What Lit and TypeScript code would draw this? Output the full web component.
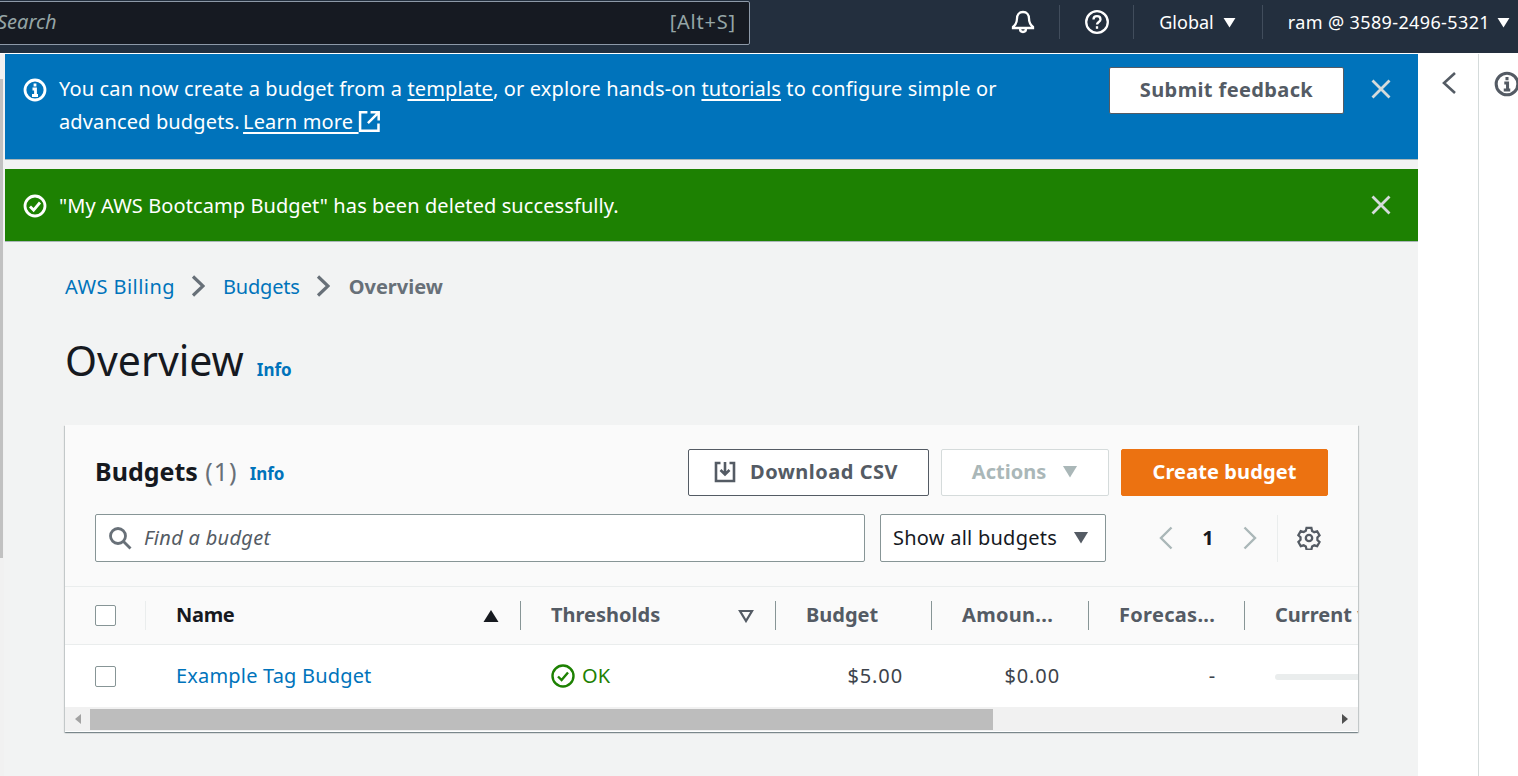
import { LitElement, html, css } from "lit";
import { customElement } from "lit/decorators.js";

const xIcon = html`<svg class="x" viewBox="0 0 20 20"><path d="M1.5 1.5 18.5 18.5M18.5 1.5 1.5 18.5" fill="none" stroke="currentColor" stroke-width="2.800"/></svg>`;
const caret = html`<svg class="caret" viewBox="0 0 14 12"><path d="M0.5 1h13L7 11.500z" fill="currentColor"/></svg>`;
const crumbSep = html`<svg class="sep" viewBox="0 0 14 22"><path d="M2 1.500l10 9.500-10 9.500" fill="none" stroke="#687078" stroke-width="3.200"/></svg>`;
const infoCircle = html`<svg viewBox="0 0 24 24" class="ban-ic"><circle cx="12" cy="12" r="10" fill="none" stroke="currentColor" stroke-width="2.800"/><path d="M12 5.600v3M9.500 11h3v6M9 17.500h6" fill="none" stroke="currentColor" stroke-width="2.800"/></svg>`;
const checkCircle = html`<svg viewBox="0 0 24 24" class="ban-ic"><circle cx="12" cy="12" r="10" fill="none" stroke="currentColor" stroke-width="2.800"/><path d="M7 12.500l3.600 3.600L17 8.500" fill="none" stroke="currentColor" stroke-width="2.800"/></svg>`;

@customElement("app-root")
export class AppRoot extends LitElement {
  static styles = css`
    :host { display: block; width: 1518px; height: 776px; overflow: hidden; background: #fff;
      font-family: "Noto Sans", "Open Sans", sans-serif; font-size: 20px; color: #16191f; letter-spacing: .18px; }
    * { box-sizing: border-box; }
    .top { height: 53px; background: #232f3e; display: flex; align-items: flex-start; padding-top: 1px; color: #fff; font-size: 18px; }
    .search { width: 754px; height: 44px; margin-left: -4px; flex: none; background: #161a22; border: 1px solid #8d99a8; border-radius: 2px;
      display: flex; align-items: center; justify-content: space-between; padding: 0 13px 3px 0; color: #95a5a6; font-size: 20px; letter-spacing: 0; }
    .search span { letter-spacing: .8px; }
    .top-right { margin-left: auto; display: flex; align-items: center; height: 42px; }
    .t-item { height: 34px; display: flex; align-items: center; border-left: 1px solid #414d5c; letter-spacing: 0; }
    .t-item:first-child { border-left: 0; }
    .t-item svg { display: block; }
    .bell { padding-right: 23px; }
    .help { padding: 0 23px 0 24px; }
    .global { padding: 0 26px 0 25px; gap: 9px; }
    .user { padding: 0 8px 0 25px; gap: 7px; letter-spacing: .38px; }
    .top .caret { width: 13px; height: 11px; color: #fff; }
    .body { display: flex; height: 722px; margin-top: 1px; }
    .main { width: 1418px; flex: none; background: #f2f3f3; padding-left: 5px; position: relative; display: flex; flex-direction: column; }
    .track { position: absolute; left: 0; top: 0; width: 4px; height: 100%; background: #f1f1f1; }
    .strip { position: absolute; left: 0; top: 25px; width: 3px; height: 479px; background: #c1c1c1; }
    .banner { color: #fff; display: flex; position: relative; border-bottom: 1px solid #aab7b8; }
    .blue { background: #0073bb; height: 106px; padding: 18px 24px 0 18px; letter-spacing: .14px; }
    .green { background: #1d8102; height: 73px; margin-top: 9px; padding: 20px 24px 0 18px; align-items: flex-start; letter-spacing: .09px; }
    .ban-ic { width: 24px; height: 24px; flex: none; margin: 6px 12px 0 0; }
    .green .ban-ic { margin-top: 5px; }
    .msg { line-height: 33px; width: 1000px; font-size: 20px; flex: none; }
    .msg a { color: #fff; text-decoration: underline; text-decoration-thickness: 2px; text-underline-offset: 3px; }
    .msg a.learn { margin-left: -2px; }
    .ext { width: 23px; height: 23px; vertical-align: -4px; margin-left: -1px; }
    .feedback { position: absolute; left: 1104px; top: 13px; width: 235px; height: 47px; background: #fff; border: 1px solid #545b64; border-radius: 2px; padding-bottom: 3px;
      color: #545b64; font-weight: 700; display: flex; align-items: center; justify-content: center; letter-spacing: .38px; }
    .x { width: 20px; height: 20px; color: #d5dbdb; position: absolute; left: 1366px; }
    .blue .x { top: 25px; } .green .x { top: 26px; }
    .content { padding: 29px 60px 0 60px; flex: 1; background: #f2f3f3; }
    .crumbs { display: flex; align-items: center; height: 30px; color: #0073bb; }
    .crumbs .aws { letter-spacing: .45px; }
    .crumbs .bud { letter-spacing: -.2px; }
    .crumbs .sep { width: 14px; height: 22px; margin: 0 18px 0 16px; }
    .crumbs b { color: #687078; font-weight: 700; letter-spacing: 0; margin-left: 1px; }
    .h1 { display: flex; align-items: baseline; margin-top: 33px; height: 60px; }
    .h1 h1 { font-size: 41px; font-weight: 400; margin: 0; line-height: 52px; color: #16191f; letter-spacing: 0; }
    .info { color: #0073bb; font-size: 17px; font-weight: 700; margin-left: 13px; letter-spacing: 0; }
    .card { width: 1293px; height: 307px; margin-top: 31px; background: #fff; box-shadow: 0 1px 1px 0 rgba(0,28,36,.3), 1px 1px 1px 0 rgba(0,28,36,.15), -1px 1px 1px 0 rgba(0,28,36,.15); display: flex; flex-direction: column; overflow: hidden; }
    .card-head { height: 162px; background: #fafafa; border-bottom: 1px solid #eaeded; padding: 24px 30px 0 30px; flex: none; }
    .row1 { display: flex; align-items: center; height: 47px; }
    .row1 h2 { margin: 0 0 2px; font-size: 25px; font-weight: 700; line-height: 45px; letter-spacing: 0; }
    .row1 h2 span { font-weight: 400; color: #687078; margin-left: 1px; letter-spacing: 1px; }
    .row1 .info { margin: 2px 0 0 12px; }
    .btns { margin-left: auto; display: flex; gap: 12px; }
    .btn { height: 47px; border: 1px solid #545b64; background: #fff; border-radius: 2px; font-weight: 700; color: #545b64; display: flex; align-items: center; justify-content: center; letter-spacing: 0; padding-bottom: 2px; }
    .dl { width: 241px; gap: 13px; letter-spacing: .5px; padding-right: 6px; }
    .dl svg { width: 24px; height: 24px; }
    .act { width: 168px; border-color: #d5dbdb; color: #aab7b8; gap: 16px; }
    .act .caret { width: 16px; height: 13px; color: #aab7b8; }
    .create { width: 207px; background: #ec7211; border-color: #ec7211; color: #fff; letter-spacing: .1px; }
    .row2 { display: flex; align-items: center; margin-top: 18px; height: 48px; }
    .find { width: 770px; height: 48px; background: #fff; border: 1px solid #879596; border-radius: 2px; display: flex; align-items: center; padding: 0 12px 1px; gap: 12px; color: #545b64; font-style: italic; letter-spacing: .3px; }
    .find svg { width: 24px; height: 24px; flex: none; }
    .sel { width: 226px; height: 48px; margin-left: 15px; background: #fff; border: 1px solid #879596; border-radius: 2px; display: flex; align-items: center; justify-content: space-between; padding: 0 16px 1px 12px; color: #16191f; letter-spacing: .25px; }
    .sel .caret { width: 16px; height: 13px; color: #545b64; }
    .pager { display: flex; align-items: center; margin-left: 53px; }
    .pager .nav { width: 14px; height: 24px; }
    .pager b { width: 70px; text-align: center; font-weight: 700; margin-top: -2px; }
    .pager .gear { margin-left: 20px; padding-left: 19px; border-left: 1px solid #eaeded; height: 47px; display: flex; align-items: center; }
    .pager .gear svg { width: 24px; height: 24px; display: block; }
    .grid { display: grid; grid-template-columns: 80px 375px 255px 156px 157px 156px 114px; flex: none; }
    .th { height: 58px; background: #fafafa; border-bottom: 1px solid #eaeded; display: flex; align-items: center; font-weight: 700; color: #545b64; position: relative; padding: 0 0 2px 31px; white-space: nowrap; overflow: hidden; letter-spacing: 0; }
    .th.ls { letter-spacing: .3px; }
    .th.sep-l::before { content: ""; position: absolute; left: 0; top: 14px; height: 29px; width: 1px; background: #879596; }
    .th.sep-lt::before { background: #eaeded; }
    .th.dark { color: #16191f; letter-spacing: -.3px; }
    .th svg.sort { position: absolute; right: 21px; width: 16px; height: 14px; top: 22px; }
    .th.cb-c { padding: 0 0 0 30px; }
    .cb { width: 21px; height: 21px; border: 1px solid #879596; border-radius: 2px; background: #fff; flex: none; }
    .td { height: 62px; background: #fff; display: flex; align-items: center; padding-left: 31px; color: #16191f; white-space: nowrap; overflow: hidden; padding-bottom: 1px; }
    .td.cb-c { padding: 1px 0 0 30px; }
    .td.r { justify-content: flex-end; padding: 0 28px 1px 0; color: #3d434b; letter-spacing: .9px; }
    .link { color: #0073bb; }
    .ok { color: #1d8102; gap: 7px; }
    .ok svg { width: 24px; height: 24px; }
    .bar { width: 100%; height: 6px; background: #eaeded; border-radius: 3px 0 0 3px; margin-top: 3px; }
    .td.bar-c { padding-right: 0; padding-left: 31px; }
    .sb { flex: none; height: 24px; background: #f1f1f1; display: flex; align-items: center; position: relative; }
    .thumb { position: absolute; left: 25px; top: 2px; width: 903px; height: 21px; background: #bdbdbd; }
    .arrow { position: absolute; top: 7px; width: 0; height: 0; border-top: 5px solid transparent; border-bottom: 5px solid transparent; }
    .al { left: 10px; border-right: 6px solid #a3a3a3; }
    .ar { right: 10px; border-left: 6px solid #505050; }
    .side { flex: 1; display: flex; background: #fff; }
    .s1 { width: 61px; border-right: 1px solid #d5dbdb; padding: 17px 0 0 23px; }
    .s1 svg { width: 16px; height: 24px; display: block; }
    .s2 { padding: 17px 0 0 15px; color: #545b64; }
    .s2 svg { width: 26px; height: 26px; display: block; }
  `;

  render() {
    return html`
      <div class="top">
        <div class="search"><i>Search</i><span>[Alt+S]</span></div>
        <div class="top-right">
          <div class="t-item bell"><svg width="26" height="26" viewBox="0 0 26 26" fill="none" stroke="#fff" stroke-width="2.300"><path d="M13 3c-4 0-6 3-6 6.500 0 4-1 6-4 8.500v1h20v-1c-3-2.500-4-4.500-4-8.500C19 6 17 3 13 3z"/><path d="M10 19.500c0 2 1.300 3.500 3 3.500s3-1.500 3-3.500"/></svg></div>
          <div class="t-item help"><svg width="26" height="26" viewBox="0 0 26 26" fill="none" stroke="#fff" stroke-width="2.300"><circle cx="13" cy="13" r="10.800"/><path d="M9.500 10.500c0-2 1.500-3.300 3.500-3.300s3.500 1.300 3.500 3.200c0 2.500-3.500 2.700-3.500 5.100"/><path d="M13 17.200v2.600"/></svg></div>
          <div class="t-item global">Global ${caret}</div>
          <div class="t-item user">ram @ 3589-2496-5321 ${caret}</div>
        </div>
      </div>
      <div class="body">
        <div class="main">
          <div class="track"></div><div class="strip"></div>
          <div class="banner blue">
            ${infoCircle}
            <div class="msg">You can now create a budget from a <a>template</a>, or explore hands-on <a>tutorials</a> to configure simple or<br>advanced budgets. <a class="learn">Learn more </a> <svg class="ext" viewBox="0 0 22 22" fill="none" stroke="#fff" stroke-width="2.400"><path d="M9 2.200H2v17.600h17.600v-7M12 2.200h7.800V10M19.800 2.200 9.500 12.500"/></svg></div>
            <div class="feedback">Submit feedback</div>
            ${xIcon}
          </div>
          <div class="banner green">
            ${checkCircle}
            <div class="msg">"My AWS Bootcamp Budget" has been deleted successfully.</div>
            ${xIcon}
          </div>
          <div class="content">
            <div class="crumbs"><span class="aws">AWS Billing</span>${crumbSep}<span class="bud">Budgets</span>${crumbSep}<b>Overview</b></div>
            <div class="h1"><h1>Overview</h1><span class="info">Info</span></div>
            <div class="card">
              <div class="card-head">
                <div class="row1">
                  <h2>Budgets <span>(1)</span></h2><span class="info">Info</span>
                  <div class="btns">
                    <div class="btn dl"><svg viewBox="0 0 24 24" fill="none" stroke="#545b64" stroke-width="2.600"><path d="M7.500 3H3v18h18V3h-4.500M12 2v12M7.500 10l4.500 4.500 4.500-4.500"/></svg>Download CSV</div>
                    <div class="btn act">Actions ${caret}</div>
                    <div class="btn create">Create budget</div>
                  </div>
                </div>
                <div class="row2">
                  <div class="find"><svg viewBox="0 0 24 24" fill="none" stroke="#687078" stroke-width="2.800"><circle cx="10" cy="10" r="7.500"/><path d="M15.500 15.500l7 7"/></svg>Find a budget</div>
                  <div class="sel">Show all budgets ${caret}</div>
                  <div class="pager">
                    <svg class="nav" viewBox="0 0 14 24" fill="none" stroke="#aab7b8" stroke-width="2.400"><path d="M12.500 1.500 2 12l10.500 10.500"/></svg>
                    <b>1</b>
                    <svg class="nav" viewBox="0 0 14 24" fill="none" stroke="#aab7b8" stroke-width="2.400"><path d="M1.500 1.500 12 12 1.500 22.500"/></svg>
                    <div class="gear"><svg viewBox="0 0 24 24" fill="none" stroke="#545b64" stroke-width="2.300"><circle cx="12" cy="12" r="3.200"/><path d="M9.500 2h5l.7 3 2.200 1.300 3-.9 2.400 4.200-2.200 2.100v2.600l2.200 2.100-2.400 4.200-3-.9-2.200 1.300-.7 3h-5l-.7-3-2.200-1.300-3 .9L1.200 16.200l2.200-2.100v-2.600L1.200 9.400l2.400-4.200 3 .9 2.200-1.300z" transform="translate(.2 0) scale(.98)"/></svg></div>
                  </div>
                </div>
              </div>
              <div class="grid">
                <div class="th cb-c"><span class="cb"></span></div>
                <div class="th dark sep-l sep-lt">Name<svg class="sort" viewBox="0 0 16 14"><path d="M8 1l7.500 12H.5z" fill="#16191f"/></svg></div>
                <div class="th sep-l">Thresholds<svg class="sort" viewBox="0 0 16 14" fill="none" stroke="#545b64" stroke-width="2.200"><path d="M2 2h12L8 12z"/></svg></div>
                <div class="th sep-l">Budget</div>
                <div class="th sep-l ls">Amoun...</div>
                <div class="th sep-l ls">Forecas...</div>
                <div class="th sep-l">Current v</div>
                <div class="td cb-c"><span class="cb"></span></div>
                <div class="td link">Example Tag Budget</div>
                <div class="td ok"><svg viewBox="0 0 24 24" fill="none" stroke="#1d8102" stroke-width="2.400"><circle cx="12" cy="12" r="10.500"/><path d="M7 12.500l3.600 3.600L17 8.500"/></svg>OK</div>
                <div class="td r">$5.00</div>
                <div class="td r">$0.00</div>
                <div class="td r">-</div>
                <div class="td bar-c"><div class="bar"></div></div>
              </div>
              <div class="sb"><div class="arrow al"></div><div class="thumb"></div><div class="arrow ar"></div></div>
            </div>
          </div>
        </div>
        <div class="side">
          <div class="s1"><svg viewBox="0 0 16 24" fill="none" stroke="#545b64" stroke-width="2.600"><path d="M14 2 3 12l11 10"/></svg></div>
          <div class="s2"><svg viewBox="0 0 24 24" fill="none" stroke="#545b64" stroke-width="2.800"><circle cx="12" cy="12" r="10"/><path d="M12 5.600v3M9.500 11h3v6M9 17.500h6"/></svg></div>
        </div>
      </div>
    `;
  }
}
